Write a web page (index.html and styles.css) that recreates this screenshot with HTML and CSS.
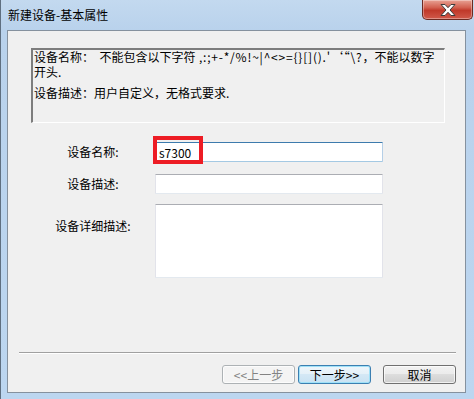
FILE: index.html
```html
<!DOCTYPE html>
<html lang="zh-CN">
<head>
  <meta charset="UTF-8">
  <title>新建设备-基本属性</title>
  <link rel="stylesheet" href="styles.css">
</head>
<body>
  <div class="window">
    <div class="titlebar">
      <span class="title">新建设备-基本属性</span>
      <button class="close-button" aria-label="关闭">
        <svg width="20" height="14" viewBox="0 0 20 14">
          <path d="M3 1.5h4l3 3.2 3-3.2h4l-5 5.5 5 5.5h-4l-3-3.2-3 3.2h-4l5-5.5z" fill="#fff" stroke="#3b3b3b" stroke-width="1" stroke-linejoin="round"/>
        </svg>
      </button>
    </div>
    <div class="client">
      <div class="info-box">
        <p>设备名称：&nbsp; 不能包含以下字符<span class="symbols"> ,:;+-*/%!~|^&lt;&gt;={}[]().'‘“\?</span>，不能以数字<br>开头.</p>
        <p>设备描述：用户自定义，无格式要求.</p>
      </div>

      <div class="form">
        <div class="form-row">
          <label class="field-label">设备名称:</label>
          <div class="field-wrap">
            <input class="text-input focused" type="text" value="s7300">
            <span class="highlight"></span>
          </div>
        </div>
        <div class="form-row row-desc">
          <label class="field-label">设备描述:</label>
          <input class="text-input" type="text">
        </div>
        <div class="form-row row-detail">
          <label class="field-label label-top">设备详细描述:</label>
          <textarea class="text-area"></textarea>
        </div>
      </div>

      <div class="separator"></div>

      <div class="button-row">
        <button class="win-button" disabled>&lt;&lt;上一步</button>
        <button class="win-button default">下一步&gt;&gt;</button>
        <button class="win-button cancel">取消</button>
      </div>
    </div>
  </div>
</body>
</html>
```

FILE: styles.css
```css
html, body {
  margin: 0;
  width: 474px;
  height: 399px;
  overflow: hidden;
}
body {
  font-family: "Noto Sans CJK SC", "Liberation Sans", sans-serif;
  font-size: 12px;
  color: #000;
}
.window {
  height: 399px;
  display: flex;
  flex-direction: column;
  background: linear-gradient(180deg, #c3d9ef 0px, #b9d2ec 30px, #bcd6f0 100%);
  box-sizing: border-box;
  border-left: 1px solid #5f6f80;
}
.titlebar {
  height: 30px;
  display: flex;
  align-items: flex-start;
  flex-shrink: 0;
}
.title {
  padding: 7px 0 0 7px;
  font-size: 12px;
  line-height: 16px;
}
.close-button {
  margin-left: auto;
  margin-right: 1px;
  width: 51px;
  height: 20px;
  padding: 0;
  border: 1px solid #6b2a22;
  border-top: none;
  border-radius: 0 0 5px 5px;
  background: linear-gradient(180deg, #e8a294 0%, #d2604f 40%, #c0392a 55%, #d0594a 100%);
  box-shadow: inset 0 0 0 1px rgba(255, 255, 255, 0.35);
  display: flex;
  align-items: center;
  justify-content: center;
}
.client {
  margin: 0 8px 0 6px;
  height: 363px;
  box-sizing: border-box;
  border: 1px solid #85919e;
  background: #f0f0f0;
  display: flex;
  flex-direction: column;
}
.info-box {
  margin: 17px 0 0 23px;
  width: 414px;
  height: 75px;
  box-sizing: border-box;
  border-top: 2px solid #7d7d7d;
  border-left: 2px solid #7d7d7d;
  border-right: 1px solid #fff;
  border-bottom: 1px solid #fff;
  padding: 0 0 0 1px;
  line-height: 15px;
}
.info-box p {
  margin: -1px 0 7px;
}
.symbols {
  letter-spacing: 0.8px;
}
.form {
  margin: 19px 0 0 23px;
  display: flex;
  flex-direction: column;
}
.form-row {
  display: flex;
  align-items: flex-start;
}
.row-desc {
  margin-top: 12px;
}
.row-detail {
  margin-top: 10px;
}
.field-label {
  width: 124px;
  text-align: center;
  line-height: 20px;
  flex-shrink: 0;
}
.label-top {
  padding-top: 12px;
}
.field-wrap {
  position: relative;
}
.text-input, .text-area {
  width: 228px;
  height: 20px;
  box-sizing: border-box;
  margin: 0;
  padding: 0 3px;
  font: inherit;
  background: #fff;
  border: 1px solid #e2e3ea;
  border-top-color: #abadb3;
  border-bottom-color: #e3e9ef;
  border-radius: 1px;
  outline: none;
}
.text-input.focused {
  border-color: #b5cfe7;
  border-top-color: #3d7bad;
  border-bottom-color: #a4c9e3;
}
.text-area {
  height: 74px;
  resize: none;
}
.highlight {
  position: absolute;
  left: -2px;
  top: -6px;
  width: 50px;
  height: 28px;
  box-sizing: border-box;
  border: 4px solid #ed1c24;
  pointer-events: none;
}
.separator {
  margin: 74px 9px 0 11px;
  border-top: 1px solid #a0a0a0;
  border-bottom: 1px solid #fff;
}
.button-row {
  margin: 11px 9px 0 0;
  display: flex;
  justify-content: flex-end;
  gap: 3px;
}
.win-button {
  width: 73px;
  height: 19px;
  padding: 0;
  font: inherit;
  line-height: 15px;
  color: #000;
  border: 1px solid #707070;
  border-radius: 3px;
  background: linear-gradient(180deg, #f2f2f2 0%, #ebebeb 50%, #dddddd 50%, #cfcfcf 100%);
  box-shadow: inset 0 0 0 1px rgba(255, 255, 255, 0.7);
}
.win-button:disabled {
  color: #838383;
  border-color: #adb2b5;
  background: #f4f4f4;
}
.win-button.default {
  border-color: #3c7fb1;
  background: linear-gradient(180deg, #eef6fb 0%, #e4f0f8 50%, #d4e8f5 50%, #c9e2f3 100%);
  box-shadow: inset 0 0 0 1px #9fe1f8;
}
.win-button.cancel {
  margin-left: 9px;
}
```
